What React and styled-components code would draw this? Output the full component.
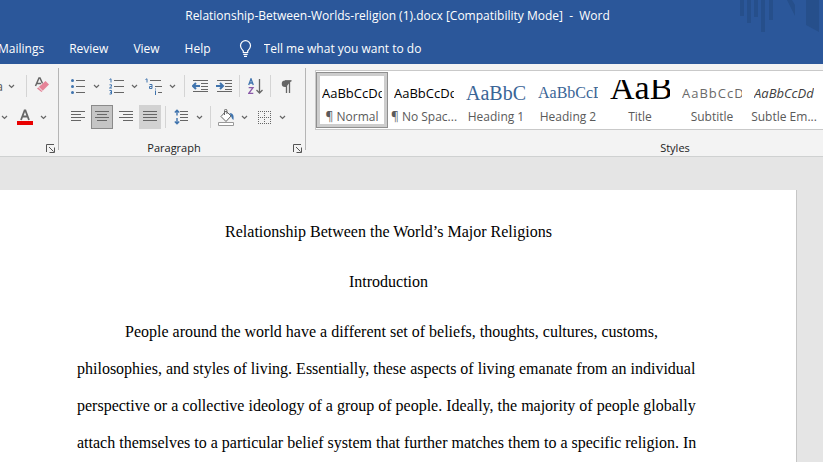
import styled, { createGlobalStyle } from 'styled-components';

const GlobalStyle = createGlobalStyle`
*{
    box-sizing:border-box;
}
body{
    margin:0;
    font-family:"Open Sans", "Noto Sans", sans-serif;
    font-size:12px;
    background:#e5e5e5;
}
button, input{
    font:inherit;
}
`;

const Window=styled.div`
min-height:100vh;
display:flex;
flex-direction:column;
overflow:hidden;
`;

const Header=styled.header`
position:relative;
background:#2b579a;
color:#fff;
`;
const HeaderArt=styled.svg`
position:absolute;
top:0;
right:0;
`;
const TitleBar=styled.h1`
margin:0;
padding-right:28px;
height:32px;
line-height:32px;
font-size:12px;
font-weight:400;
text-align:center;
white-space:pre;
`;
const Tabs=styled.nav`
display:flex;
align-items:center;
gap:25px;
height:32px;
padding-top:1px;
margin-left:-2px;
`;
const Tab=styled.a`
color:#fff;
text-decoration:none;
line-height:31px;
`;
const TellMe=styled.label`
display:flex;
flex:1;
align-items:center;
gap:12px;
padding-left:3px;
svg{
    flex:none;
}
`;
const TellMeInput=styled.input`
flex:1;
min-width:0;
padding:0;
border:0;
outline:0;
background:transparent;
color:#fff;
&::placeholder{
    color:#fff;
    opacity:1;
}
`;

const Ribbon=styled.div`
display:flex;
height:93px;
background:#f3f3f3;
border-bottom:1px solid #cfd1d1;
overflow:hidden;
`;
const Group=styled.section`
position:relative;
flex:none;
display:flex;
flex-direction:column;
width:${props=>props.$width}px;
padding-top:10px;
overflow:hidden;
`;
const GroupEdge=styled.div`
flex:none;
width:1px;
margin:4px 0 6px;
background:#b5b5b5;
`;
const ToolRow=styled.div`
display:flex;
align-items:center;
justify-content:${props=>props.$end ? "flex-end" : "flex-start"};
height:24px;
margin-bottom:7px;
padding:0 ${props=>props.$end || 0}px 0 ${props=>props.$start || 0}px;
`;
const Tool=styled.button`
flex:none;
display:flex;
align-items:center;
justify-content:${props=>props.$flush ? "flex-end" : "center"};
width:22px;
height:24px;
margin:0 1px;
padding:0;
color:#555;
border:1px solid ${props=>props.$active ? "#8a8a8a" : "transparent"};
background:${props=>props.$active ? "#c5c5c5" : props.$hover ? "#d2d2d2" : "transparent"};
svg{
    flex:none;
}
`;
const Arrow=styled.button`
flex:none;
display:flex;
align-items:center;
justify-content:center;
width:12px;
height:24px;
margin-right:${props=>props.$gap || 0}px;
padding:0;
border:0;
background:transparent;
`;
const Divider=styled.div`
flex:none;
width:1px;
height:22px;
margin:0 3px;
background:#d4d4d4;
`;
const GroupName=styled.h2`
margin:4px 0 0;
font-size:11px;
font-weight:400;
line-height:16px;
text-align:center;
color:#222;
padding-right:${props=>props.$launcher ? 16 : 0}px;
`;
const Launcher=styled.button`
position:absolute;
right:3px;
bottom:3px;
width:9px;
height:9px;
padding:0;
border:0;
background:transparent;
display:flex;
`;

const StylesGroup=styled(Group)`
padding-top:6px;
`;
const Gallery=styled.div`
display:flex;
height:60px;
margin-left:9px;
padding:1px 0;
background:#fff;
border:1px solid #c9c9c9;
border-width:1px 0 1px 1px;
`;
const StyleTile=styled.button`
flex:none;
display:flex;
flex-direction:column;
align-items:center;
width:72px;
height:56px;
padding:7px 5px 0;
background:#fff;
border:1px solid ${props=>props.$active ? "#8f8f8f" : "transparent"};
box-shadow:${props=>props.$active ? "inset 0 0 0 3px #cdcdcd" : "none"};
`;
const Preview=styled.span`
width:60px;
height:26px;
overflow:hidden;
white-space:nowrap;
text-align:left;
font-family:${props=>props.$serif ? '"Liberation Serif", serif' : '"Open Sans", sans-serif'};
font-size:${props=>props.$size || 13}px;
line-height:${props=>props.$line || 26}px;
letter-spacing:${props=>props.$spaced ? "1px" : "normal"};
font-style:${props=>props.$italic ? "italic" : "normal"};
color:${props=>props.$color || "#000"};
`;
const StyleName=styled.span`
margin-top:3px;
line-height:16px;
white-space:nowrap;
color:#5a5a5a;
`;
const StylesName=styled(GroupName)`
margin-top:10px;
`;

const Canvas=styled.main`
flex:1;
display:flex;
padding:33px 26px 0 0;
`;
const Page=styled.article`
flex:1;
padding:23px 96px 0 77px;
background:#fff;
border-right:1px solid #c6c6c6;
color:#000;
font-family:"Liberation Serif", "Times New Roman", serif;
font-size:16px;
line-height:37px;
`;
const Centered=styled.h3`
margin:0 0 13px;
font-size:16px;
font-weight:400;
text-align:center;
`;
const Paragraph=styled.p`
margin:0;
text-indent:48px;
`;

const BLUE="#3f73ad";
const GREY="#666";

function Chevron({ label, gap }){
    return(<Arrow aria-label={label} $gap={gap}>
        <svg width="7" height="5" viewBox="0 0 7 5" fill="none" stroke="#666" strokeWidth="1.2">
            <path d="M1 1l2.5 2.5L6 1"/>
        </svg>
    </Arrow>);
}

function LaunchIcon(){
    return(<svg width="9" height="9" viewBox="0 0 9 9" fill="none" stroke="#555">
        <path d="M.5 8V.5H8M3 3l4.5 4.5M8.500 3.500v5h-5"/>
    </svg>);
}

function Lines({ rows }){
    return(<svg width="14" height="12" viewBox="0 0 14 12" stroke={GREY}>
        {rows.map(([from, to], i)=><path key={i} d={`M${from} ${i * 3 + 0.5}H${to}`}/>)}
    </svg>);
}

function EraserIcon(){
    return(<svg width="16" height="18" viewBox="0 0 16 18">
        <path d="M1.500 9L5 1h1l2.500 5.500M3 6.500h4" fill="none" stroke={GREY} strokeWidth="1.500"/>
        <path d="M11.500 4L15 7.500 7.500 15 3 11.500z" fill="#e58498"/>
        <path d="M4.500 10l4 4" stroke="#f3f3f3"/>
    </svg>);
}

function FontColorIcon(){
    return(<svg width="16" height="16" viewBox="0 0 16 16">
        <path d="M4 11L7.600 1.500h.8L12 11M5.500 7.500h5" fill="none" stroke={GREY} strokeWidth="1.800"/>
        <path d="M0 12h16v4H0z" fill="#e80000"/>
    </svg>);
}

function BulletsIcon(){
    return(<svg width="14" height="15" viewBox="0 0 14 15">
        <path d="M5 1.500h9M5 7.500h9M5 13.500h9" stroke={GREY}/>
        <g fill={BLUE}>
            <circle cx="1.500" cy="1.500" r="1.500"/>
            <circle cx="1.500" cy="7.500" r="1.500"/>
            <circle cx="1.500" cy="13.500" r="1.500"/>
        </g>
    </svg>);
}

function NumberingIcon(){
    return(<svg width="15" height="17" viewBox="0 0 15 17" fill="none">
        <path d="M5 2.500h10M5 8.500h10M5 14.500h10" stroke={GREY}/>
        <path d="M.5 1.500L2 .8V4.500M.5 6.800h2v1.500L.5 10h2.500M.5 12.500h2v3.500h-2M1 14.300h1.500" stroke={BLUE}/>
    </svg>);
}

function MultilevelIcon(){
    return(<svg width="18" height="17" viewBox="0 0 18 17" fill="none">
        <path d="M5 2.500h11M10 8.500h7M13 14.500h4" stroke={GREY}/>
        <path d="M.5 1.500L2 .8V4.500M4.500 6.500h2.500v4H4.500v-2H7M10.500 12.500V17M10.500 10.500v1" stroke={BLUE}/>
    </svg>);
}

function IndentIcon({ increase }){
    return(<svg width="16" height="14" viewBox="0 0 16 14" fill="none">
        <path d="M1 1.500h15M9 4.500h7M9 7.500h7M9 10.500h7M1 12.500h15" stroke={GREY}/>
        <path d={increase ? "M0 7h7M4 4l3 3-3 3" : "M8 7H1M4 4L1 7l3 3"} stroke={BLUE} strokeWidth="2"/>
    </svg>);
}

function SortIcon(){
    return(<svg width="15" height="17" viewBox="0 0 15 17" fill="none">
        <path d="M.7 7L3 .8 5.300 7M1.500 5h3" stroke={BLUE} strokeWidth="1.300"/>
        <path d="M.7 9.700h4.300L.8 15.300h4.500" stroke="#8a5aa8" strokeWidth="1.300"/>
        <path d="M11.500 1v14M8.500 12l3 3 3-3" stroke={GREY} strokeWidth="1.300"/>
    </svg>);
}

function PilcrowIcon(){
    return(<svg width="11" height="13" viewBox="0 0 11 13">
        <path d="M10.500.5H4a3.200 3.200 0 0 0 0 6.500h1" fill={GREY}/>
        <path d="M4 .8h6.500M5.500 1v12M8.500 1v12" stroke={GREY} strokeWidth="1.300"/>
    </svg>);
}

function SpacingIcon(){
    return(<svg width="15" height="16" viewBox="0 0 15 16" fill="none">
        <path d="M6 2.500h8M6 5.500h8M6 8.500h8M6 11.500h8" stroke={GREY}/>
        <path d="M3 1v5.500M3 9v6M.8 3.500L3 1.200l2.200 2.300M.8 12.500L3 14.800l2.200-2.300" stroke={BLUE} strokeWidth="1.400"/>
    </svg>);
}

function BucketIcon(){
    return(<svg width="17" height="17" viewBox="0 0 17 17">
        <path d="M3 7.500L8 2l5 5-5 5.500z" fill="#fff" stroke={GREY}/>
        <path d="M6.500 6V1.500a1.200 1.200 0 0 1 2.400 0V5" fill="none" stroke={GREY}/>
        <path d="M11.500 4c4 0 4.500 3 4 7-1.500-1-2-2.500-2.500-4z" fill={BLUE}/>
        <path d="M.5 13.500h15v3H.5z" fill="#fff" stroke="#999"/>
    </svg>);
}

function BordersIcon(){
    return(<svg width="13" height="13" viewBox="0 0 13 13" fill="none" stroke={GREY}>
        <path strokeDasharray="1 1" d="M0 .5h13M0 6.500h13M0 12.500h13M.5 0v13M6.500 0v13M12.500 0v13"/>
    </svg>);
}

function BulbIcon(){
    return(<svg width="13" height="17" viewBox="0 0 13 17" fill="none" stroke="#fff" strokeWidth="1.200">
        <path d="M4.300 12.500V11C3 9.500 1.500 8.200 1.500 5.700a5 5 0 0 1 10 0c0 2.500-1.500 3.800-2.800 5.300v1.500zM4.300 14.300h4.400M5 16.300h3"/>
    </svg>);
}

const tabs=["Mailings", "Review", "View", "Help"];

const styleList=[
    { name:"¶ Normal", active:true },
    { name:"¶ No Spac..." },
    { name:"Heading 1", serif:true, size:20, color:"#3a6596" },
    { name:"Heading 2", serif:true, size:16, color:"#3a6596" },
    { name:"Title", serif:true, size:34, line:16 },
    { name:"Subtitle", spaced:true, color:"#6a6a6a" },
    { name:"Subtle Em...", italic:true, color:"#404040" },
];

export default function App(){
    return(<Window>
        <GlobalStyle/>
        <Header>
            <HeaderArt width="84" height="34" viewBox="0 0 84 34" fill="#264f8b" aria-hidden="true">
                <path d="M1 0h4v16H1zM8 0h4v23H8zM15 0h4v17h-4zM22 0h4v32h-4zM30 0h4v20h-4zM48 0h5l3 5v11zM67 0h13v32L67 25z"/>
            </HeaderArt>
            <TitleBar>Relationship-Between-Worlds-religion (1).docx [Compatibility Mode]  -  Word</TitleBar>
            <Tabs>
                {tabs.map(tab=><Tab key={tab} href="#">{tab}</Tab>)}
                <TellMe>
                    <BulbIcon/>
                    <TellMeInput aria-label="Tell me what you want to do" placeholder="Tell me what you want to do"/>
                </TellMe>
            </Tabs>
        </Header>

        <Ribbon>
            <Group $width={58}>
                <ToolRow $end={4}>
                    <Tool aria-label="Change case" $flush>Aa</Tool>
                    <Chevron label="Case options" gap={6}/>
                    <Divider/>
                    <Tool aria-label="Clear formatting"><EraserIcon/></Tool>
                </ToolRow>
                <ToolRow $end={9}>
                    <Chevron label="Highlight options" gap={3}/>
                    <Tool aria-label="Font color"><FontColorIcon/></Tool>
                    <Chevron label="Font color options"/>
                </ToolRow>
                <Launcher aria-label="Font settings"><LaunchIcon/></Launcher>
            </Group>
            <GroupEdge/>

            <Group $width={246}>
                <ToolRow $start={7}>
                    <Tool aria-label="Bullets"><BulletsIcon/></Tool>
                    <Chevron label="Bullet options" gap={2}/>
                    <Tool aria-label="Numbering"><NumberingIcon/></Tool>
                    <Chevron label="Numbering options" gap={2}/>
                    <Tool aria-label="Multilevel list"><MultilevelIcon/></Tool>
                    <Chevron label="Multilevel options" gap={3}/>
                    <Divider/>
                    <Tool aria-label="Decrease indent"><IndentIcon/></Tool>
                    <Tool aria-label="Increase indent"><IndentIcon increase/></Tool>
                    <Divider/>
                    <Tool aria-label="Sort"><SortIcon/></Tool>
                    <Divider/>
                    <Tool aria-label="Show paragraph marks"><PilcrowIcon/></Tool>
                </ToolRow>
                <ToolRow $start={7}>
                    <Tool aria-label="Align left"><Lines rows={[[0, 14], [0, 10], [0, 14], [0, 10]]}/></Tool>
                    <Tool aria-label="Center" $active><Lines rows={[[0, 14], [2, 12], [0, 14], [2, 12]]}/></Tool>
                    <Tool aria-label="Align right"><Lines rows={[[0, 14], [4, 14], [0, 14], [4, 14]]}/></Tool>
                    <Tool aria-label="Justify" $hover><Lines rows={[[0, 14], [0, 14], [0, 14], [0, 14]]}/></Tool>
                    <Divider/>
                    <Tool aria-label="Line spacing"><SpacingIcon/></Tool>
                    <Chevron label="Line spacing options" gap={2}/>
                    <Divider/>
                    <Tool aria-label="Shading"><BucketIcon/></Tool>
                    <Chevron label="Shading options" gap={2}/>
                    <Tool aria-label="Borders"><BordersIcon/></Tool>
                    <Chevron label="Border options"/>
                </ToolRow>
                <GroupName $launcher>Paragraph</GroupName>
                <Launcher aria-label="Paragraph settings"><LaunchIcon/></Launcher>
            </Group>
            <GroupEdge/>

            <StylesGroup $width={738}>
                <Gallery>
                    {styleList.map(item=>(
                        <StyleTile key={item.name} $active={item.active}>
                            <Preview
                                $serif={item.serif}
                                $size={item.size}
                                $line={item.line}
                                $spaced={item.spaced}
                                $italic={item.italic}
                                $color={item.color}
                            >AaBbCcDd</Preview>
                            <StyleName>{item.name}</StyleName>
                        </StyleTile>
                    ))}
                </Gallery>
                <StylesName>Styles</StylesName>
            </StylesGroup>
        </Ribbon>

        <Canvas>
            <Page>
                <Centered>Relationship Between the World’s Major Religions</Centered>
                <Centered>Introduction</Centered>
                <Paragraph>
                    People around the world have a different set of beliefs, thoughts, cultures, customs,
                    philosophies, and styles of living. Essentially, these aspects of living emanate from an individual
                    perspective or a collective ideology of a group of people. Ideally, the majority of people globally
                    attach themselves to a particular belief system that further matches them to a specific religion. In
                </Paragraph>
            </Page>
        </Canvas>
    </Window>);
}
